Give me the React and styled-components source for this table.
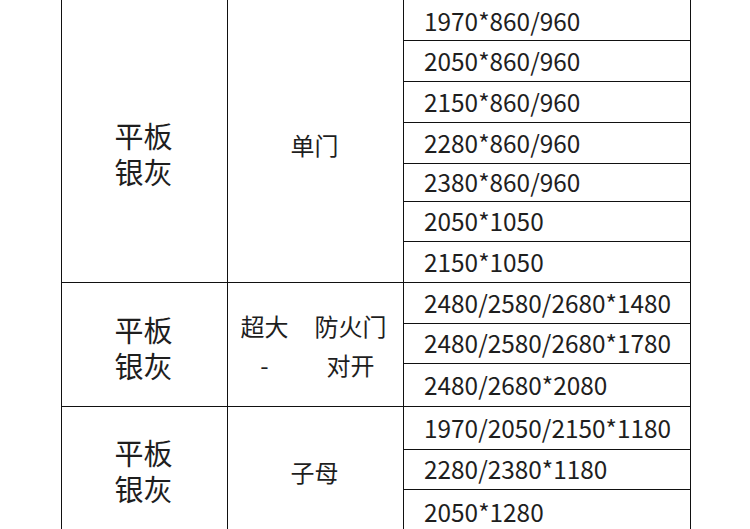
import styled, { createGlobalStyle } from 'styled-components'

const GlobalStyle = createGlobalStyle`
  html, body {
    margin: 0;
    padding: 0;
    background: #ffffff;
  }
  body {
    font-family: 'Noto Sans CJK SC', 'Noto Sans', sans-serif;
    color: #1e1e1e;
  }
`

const Page = styled.div`
  width: 750px;
  height: 529px;
  overflow: hidden;
  padding-left: 61px;
  box-sizing: border-box;
`

const Group = styled.div`
  display: grid;
  grid-template-columns: 166px 176px 286px;
  width: 630px;
  box-sizing: border-box;
  border-left: 1px solid #111;
  border-right: 1px solid #111;
  border-bottom: 1px solid #111;
`

const ColorCell = styled.div`
  display: flex;
  align-items: center;
  justify-content: center;
  border-right: 1px solid #111;
  padding-top: ${(p) => p.$shift ?? 0}px;
  padding-right: 2px;
  box-sizing: border-box;
  font-size: 29px;
  line-height: 36px;
  text-align: center;
`

const TypeCell = styled(ColorCell)`
  font-size: 24px;
  line-height: 39px;
`

const TypeWords = styled.div`
  display: grid;
  grid-template-columns: auto auto;
  column-gap: 26px;
  justify-items: center;
  margin-left: -2px;
`

const Sizes = styled.div`
  display: flex;
  flex-direction: column;
`

const SizeRow = styled.div`
  height: ${(p) => p.$h}px;
  box-sizing: border-box;
  display: flex;
  align-items: center;
  padding-left: 20px;
  padding-top: ${(p) => p.$pad ?? 0}px;
  font-size: 24.4px;
  line-height: 1;
  border-bottom: 1px solid #111;

  &:last-child {
    border-bottom: none;
  }
`

const GROUPS = [
  {
    type: '单门',
    colorShift: 24,
    typeShift: 6,
    rows: [
      ['1970*860/960', 41, 3],
      ['2050*860/960', 41],
      ['2150*860/960', 41],
      ['2280*860/960', 41],
      ['2380*860/960', 38],
      ['2050*1050', 40],
      ['2150*1050', 40],
    ],
  },
  {
    type: 'double',
    colorShift: 4,
    typeShift: 0,
    rows: [
      ['2480/2580/2680*1480', 41],
      ['2480/2580/2680*1780', 40],
      ['2480/2680*2080', 42],
    ],
  },
  {
    type: '子母',
    colorShift: 2,
    typeShift: 4,
    rows: [
      ['1970/2050/2150*1180', 43],
      ['2280/2380*1180', 40],
      ['2050*1280', 41, 3],
    ],
  },
]

function App() {
  return (
    <>
      <GlobalStyle />
      <Page>
        {GROUPS.map((g, i) => (
          <Group key={i}>
            <ColorCell $shift={g.colorShift}>
              平板
              <br />
              银灰
            </ColorCell>
            <TypeCell $shift={g.typeShift}>
              {g.type === 'double' ? (
                <TypeWords>
                  <span>超大</span>
                  <span>防火门</span>
                  <span>-</span>
                  <span>对开</span>
                </TypeWords>
              ) : (
                g.type
              )}
            </TypeCell>
            <Sizes>
              {g.rows.map(([text, h, pad]) => (
                <SizeRow key={text} $h={h} $pad={pad}>
                  {text}
                </SizeRow>
              ))}
            </Sizes>
          </Group>
        ))}
      </Page>
    </>
  )
}

export default App
